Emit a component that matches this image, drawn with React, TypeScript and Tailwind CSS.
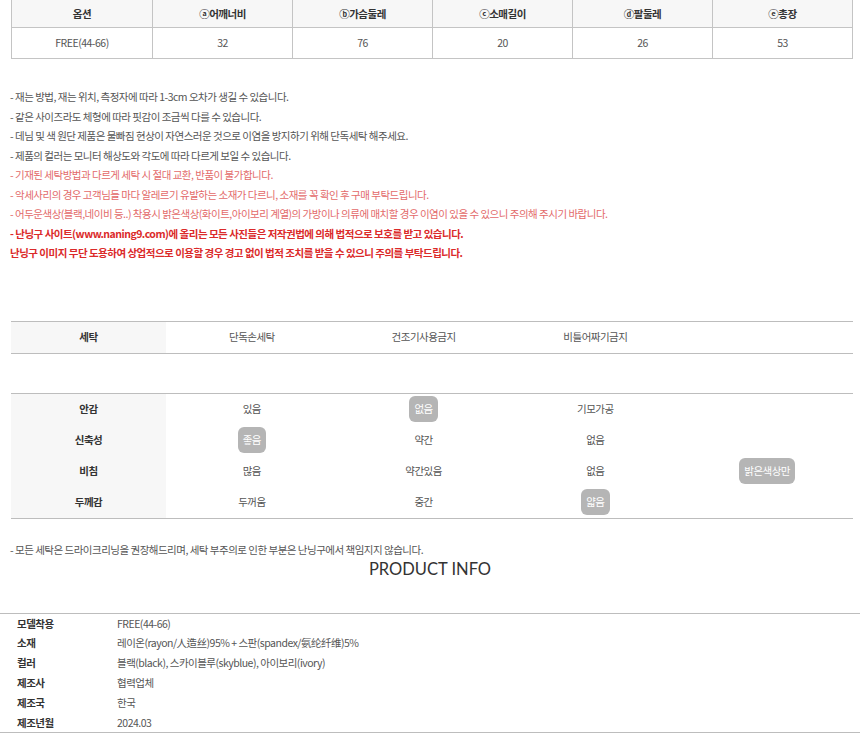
const font = { fontFamily: '"Noto Sans CJK KR", "Noto Sans", sans-serif' };

const sizeHead = ["옵션", "ⓐ어깨너비", "ⓑ가슴둘레", "ⓒ소매길이", "ⓓ팔둘레", "ⓔ총장"];
const sizeRow = ["FREE(44-66)", "32", "76", "20", "26", "53"];

const notes: { text: string; tone: "gray" | "red" | "bold" }[] = [
  { text: "- 재는 방법, 재는 위치, 측정자에 따라 1-3cm 오차가 생길 수 있습니다.", tone: "gray" },
  { text: "- 같은 사이즈라도 체형에 따라 핏감이 조금씩 다를 수 있습니다.", tone: "gray" },
  { text: "- 데님 및 색 원단 제품은 물빠짐 현상이 자연스러운 것으로 이염을 방지하기 위해 단독세탁 해주세요.", tone: "gray" },
  { text: "- 제품의 컬러는 모니터 해상도와 각도에 따라 다르게 보일 수 있습니다.", tone: "gray" },
  { text: "- 기재된 세탁방법과 다르게 세탁 시 절대 교환, 반품이 불가합니다.", tone: "red" },
  { text: "- 악세사리의 경우 고객님들 마다 알레르기 유발하는 소재가 다르니, 소재를 꼭 확인 후 구매 부탁드립니다.", tone: "red" },
  { text: "- 어두운색상(블랙,네이비 등..) 착용시 밝은색상(화이트,아이보리 계열)의 가방이나 의류에 매치할 경우 이염이 있을 수 있으니 주의해 주시기 바랍니다.", tone: "red" },
  { text: "- 난닝구 사이트(www.naning9.com)에 올리는 모든 사진들은 저작권법에 의해 법적으로 보호를 받고 있습니다.", tone: "bold" },
  { text: "난닝구 이미지 무단 도용하여 상업적으로 이용할 경우 경고 없이 법적 조치를 받을 수 있으니 주의를 부탁드립니다.", tone: "bold" },
];

type Cell = { v: string; on?: boolean };
const props: { label: string; cells: Cell[] }[] = [
  { label: "안감", cells: [{ v: "있음" }, { v: "없음", on: true }, { v: "기모가공" }, { v: "" }] },
  { label: "신축성", cells: [{ v: "좋음", on: true }, { v: "약간" }, { v: "없음" }, { v: "" }] },
  { label: "비침", cells: [{ v: "많음" }, { v: "약간있음" }, { v: "없음" }, { v: "밝은색상만", on: true }] },
  { label: "두께감", cells: [{ v: "두꺼움" }, { v: "중간" }, { v: "얇음", on: true }, { v: "" }] },
];

const info = [
  ["모델착용", "FREE(44-66)"],
  ["소재", "레이온(rayon/人造丝)95% + 스판(spandex/氨纶纤维)5%"],
  ["컬러", "블랙(black), 스카이블루(skyblue), 아이보리(ivory)"],
  ["제조사", "협력업체"],
  ["제조국", "한국"],
  ["제조년월", "2024.03"],
];

function Value({ c }: { c: Cell }) {
  if (!c.v) return <div />;
  return (
    <div className="flex items-center justify-center">
      {c.on ? (
        <span className="bg-[#b5b5b5] text-white rounded-[6px] px-[5px] h-[26px] flex items-center">{c.v}</span>
      ) : (
        <span>{c.v}</span>
      )}
    </div>
  );
}

export default function App() {
  return (
    <div className="w-[860px] h-[744px] bg-white overflow-hidden text-[10.5px] tracking-[-0.5px] text-[#555]" style={font}>
      {/* SIZE TABLE */}
      <div className="ml-[11px] w-[842px] border-l border-r border-b border-[#c4c4c4]">
        <div className="grid grid-cols-6 h-[28px] bg-[#f7f7f7] border-b border-[#c4c4c4]">
          {sizeHead.map((h, i) => (
            <div key={h} className={`flex items-center justify-center font-bold text-[#333] ${i ? "border-l border-[#c4c4c4]" : ""}`}>
              {h}
            </div>
          ))}
        </div>
        <div className="grid grid-cols-6 h-[30px]">
          {sizeRow.map((v, i) => (
            <div key={i} className={`flex items-center justify-center ${i ? "border-l border-[#c4c4c4]" : ""}`}>
              {v}
            </div>
          ))}
        </div>
      </div>

      {/* NOTES */}
      <div className="mt-[28px] pl-[10px] flex flex-col">
        {notes.map((n) => (
          <div
            key={n.text}
            className={`h-[19.5px] leading-[19.5px] whitespace-nowrap ${
              n.tone === "gray" ? "text-[#555]" : n.tone === "red" ? "text-[#e36a6a]" : "text-[#db2a2a] font-bold"
            }`}
          >
            {n.text}
          </div>
        ))}
      </div>

      {/* WASH */}
      <div className="mt-[58px] ml-[11px] w-[842px] border-t border-b border-[#bdbdbd] grid grid-cols-[155px_1fr_1fr_1fr_1fr] h-[33px]">
        <div className="bg-[#f7f7f7] flex items-center justify-center font-bold text-[#333]">세탁</div>
        <div className="flex items-center justify-center">단독손세탁</div>
        <div className="flex items-center justify-center">건조기사용금지</div>
        <div className="flex items-center justify-center">비틀어짜기금지</div>
        <div />
      </div>

      {/* PROPERTIES */}
      <div className="mt-[39px] ml-[11px] w-[842px] border-t border-b border-[#bdbdbd] grid grid-cols-[155px_1fr]">
        <div className="bg-[#f7f7f7] flex flex-col">
          {props.map((p) => (
            <div key={p.label} className="h-[31px] flex items-center justify-center font-bold text-[#333]">
              {p.label}
            </div>
          ))}
        </div>
        <div className="flex flex-col">
          {props.map((p) => (
            <div key={p.label} className="h-[31px] grid grid-cols-4">
              {p.cells.map((c, i) => (
                <Value key={i} c={c} />
              ))}
            </div>
          ))}
        </div>
      </div>

      <div className="mt-[21px] pl-[10px] h-[19px] leading-[19px]">- 모든 세탁은 드라이크리닝을 권장해드리며, 세탁 부주의로 인한 부분은 난닝구에서 책임지지 않습니다.</div>

      <div className="text-center text-[16.5px] leading-[20px] tracking-normal text-[#333]" style={{ fontFamily: '"Lato", "Noto Sans", sans-serif' }}>
        PRODUCT INFO
      </div>

      {/* PRODUCT INFO */}
      <div className="mt-[34px] border-t border-b border-[#bdbdbd]">
        {info.map(([k, v]) => (
          <div key={k} className="h-[19.8px] flex items-center">
            <div className="w-[117px] pl-[17px] font-bold text-[#333]">{k}</div>
            <div className="text-[#555]">{v}</div>
          </div>
        ))}
      </div>
    </div>
  );
}
